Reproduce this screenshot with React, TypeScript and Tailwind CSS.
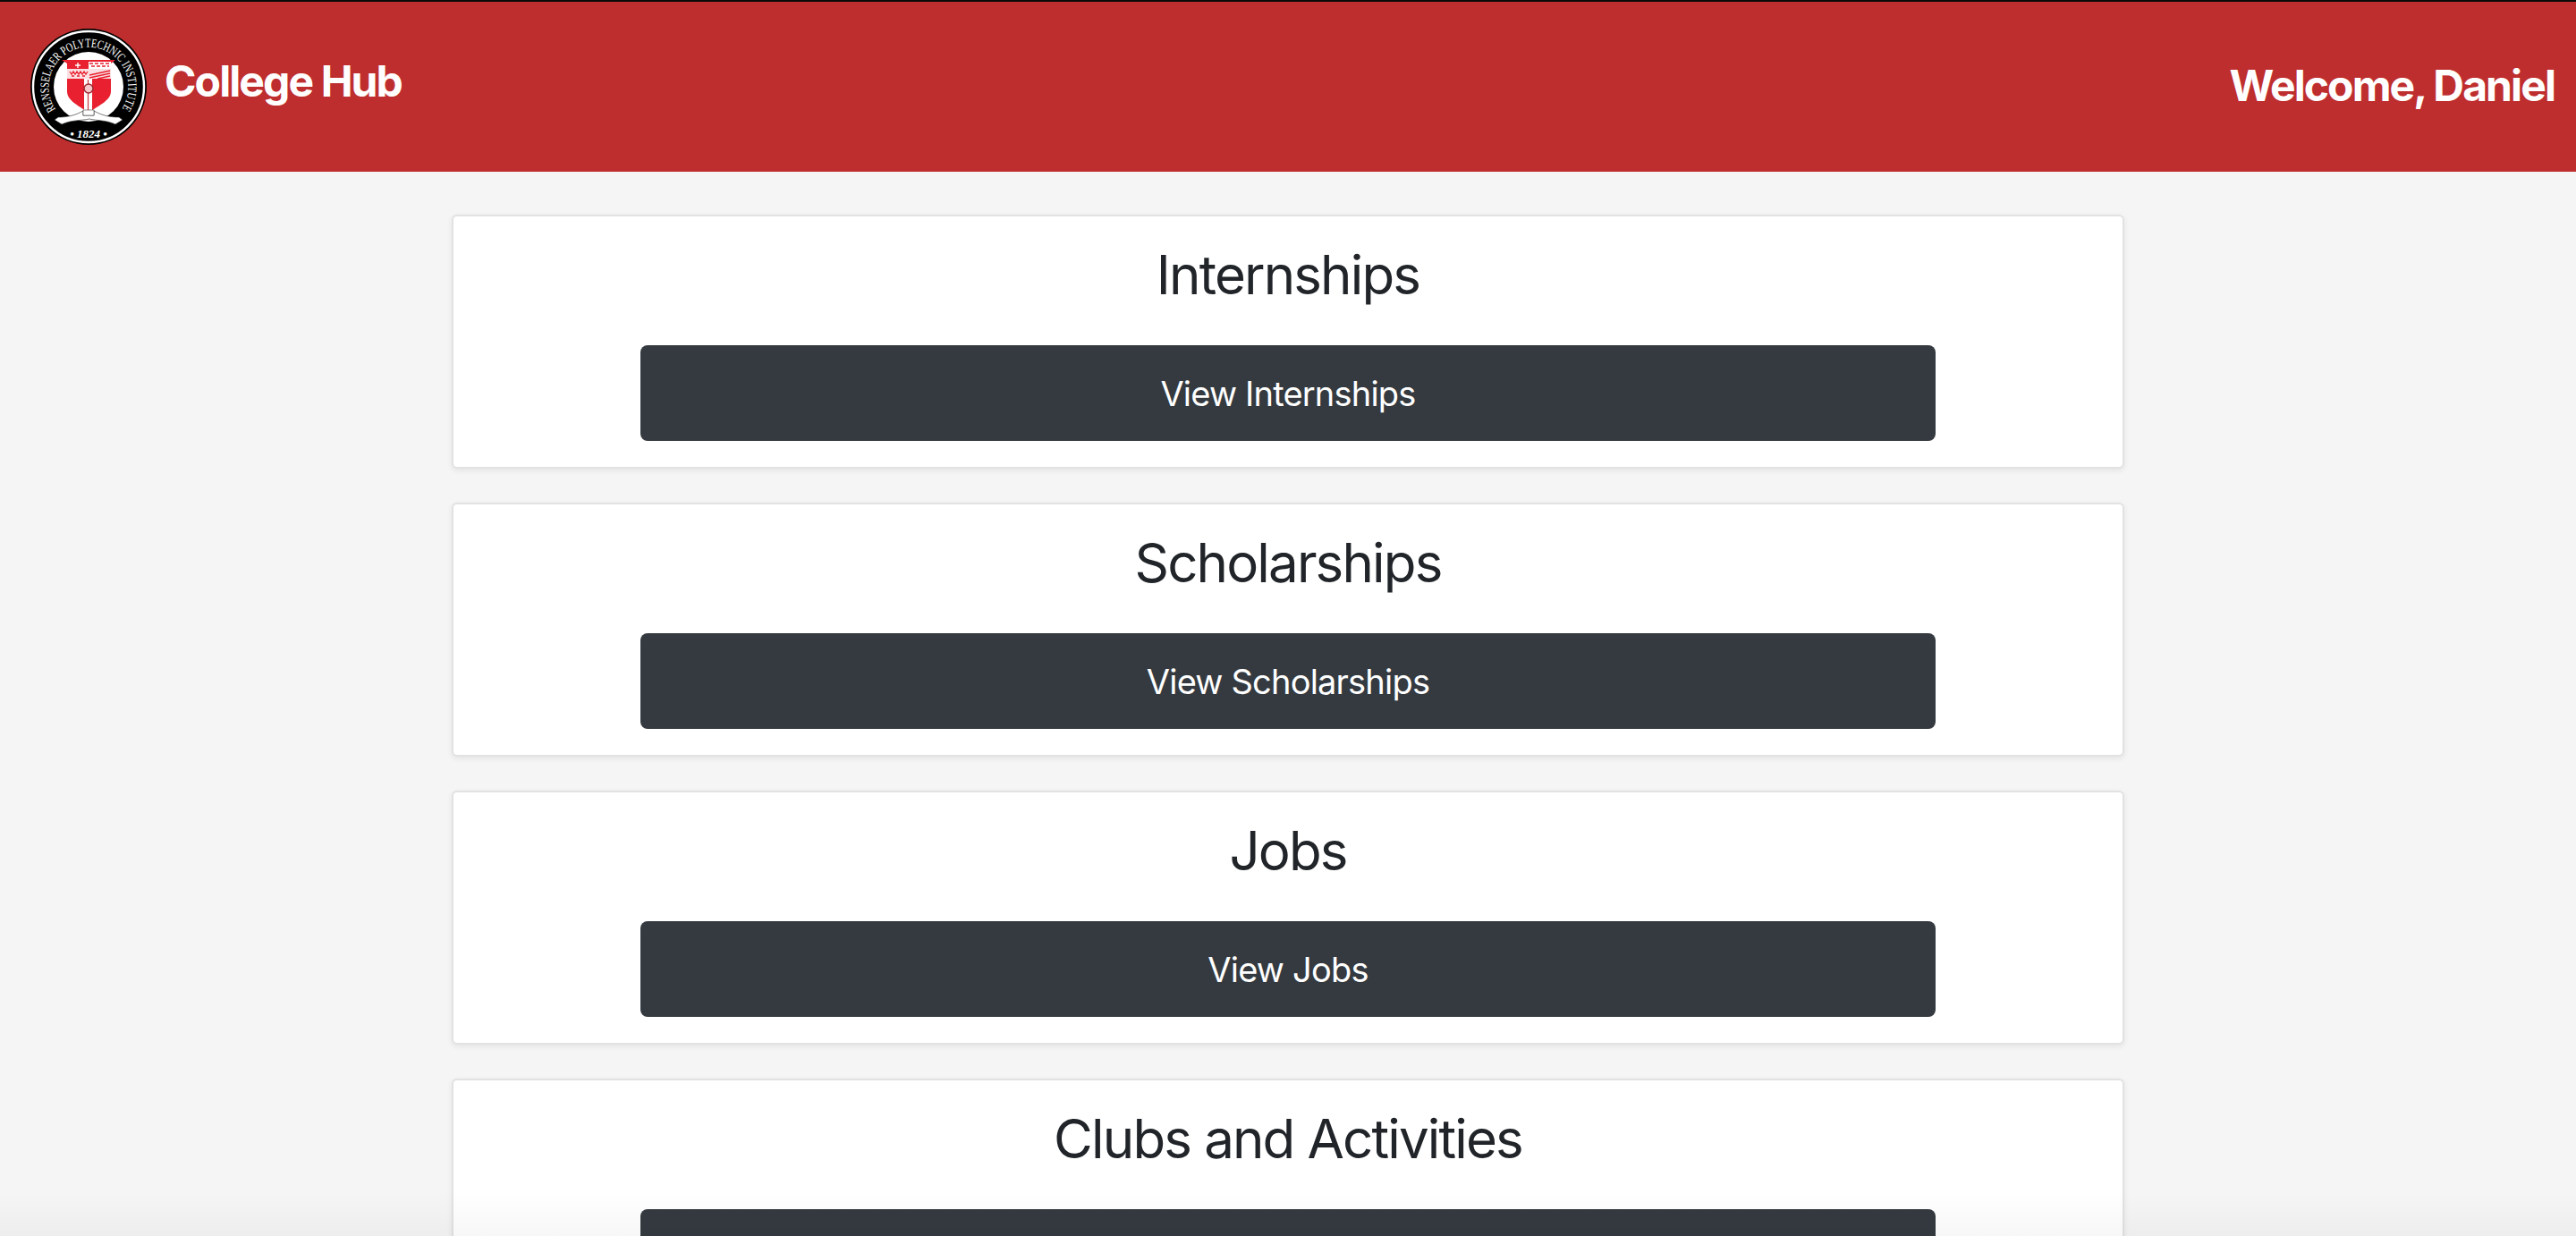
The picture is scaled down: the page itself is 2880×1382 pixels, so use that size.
const SANS = "font-['Inter','Liberation_Sans',sans-serif]";

function Seal() {
  return (
    <svg viewBox="0 0 130 130" className="w-[130px] h-[130px] shrink-0">
      <defs>
        <path id="sealRing" d="M 28.4 90.5 A 44.5 44.5 0 1 1 101.6 90.5" />
      </defs>
      <circle cx="65" cy="65" r="65" fill="#000" />
      <circle cx="65" cy="65" r="62" fill="none" stroke="#fff" strokeWidth="2.4" />
      <circle cx="65" cy="65" r="39" fill="#fff" />
      <text fill="#fff" fontFamily="Liberation Serif, serif" fontSize="14" textLength="192" lengthAdjust="spacingAndGlyphs">
        <textPath href="#sealRing" textLength="192" lengthAdjust="spacingAndGlyphs">RENSSELAER POLYTECHNIC INSTITUTE</textPath>
      </text>
      <path d="M35 35 H95 L90 39 V70 C90 80 78 85 65 94 C52 85 41 80 41 70 V39 Z" fill="#e8202f" />
      <path d="M53 38v6M50 41h6" stroke="#fff" strokeWidth="1.4" />
      <rect x="65" y="37" width="25" height="8" fill="#fff" />
      <path d="M66 39h23M68 42h20" stroke="#e8202f" strokeWidth="1.6" strokeDasharray="4 2" />
      <rect x="41" y="45" width="24" height="11" fill="#fbdfe2" />
      <path d="M44 48l2 3 2-3 2 3 2-3 2 3 2-3 2 3 2-3 2 3 2-3M46 53h3M52 53h3M58 53h3" stroke="#e8202f" strokeWidth="1.3" fill="none" />
      <rect x="65" y="45" width="25" height="11" fill="#fbdfe2" />
      <path d="M66 52l23-5M66 55l23-5M75 56l14-3" stroke="#e8202f" strokeWidth="1.3" />
      <path d="M60 56h9v36l-4.500 2-4.500-2z" fill="#fff" />
      <path d="M64.500 57v35" stroke="#c93a43" strokeWidth="1.2" />
      <circle cx="65" cy="67" r="5" fill="#f7c8cc" stroke="#9c2b33" strokeWidth="1.600" />
      <path d="M27 102 L31 99 C42 99 50 97 59 92 L59 97 H71 V92 C80 97 88 99 99 99 L103 102 L95 107 C84 102 74 103 66 101 C56 103 46 102 35 107 Z" fill="#fff" stroke="#222" strokeWidth="0.6" />
      <rect x="59" y="91" width="12" height="6" fill="#fff" stroke="#222" strokeWidth="0.5" />
      <text x="65" y="122" textAnchor="middle" fill="#fff" fontFamily="Liberation Serif, serif" fontStyle="italic" fontWeight="700" fontSize="13">
        • 1824 •
      </text>
    </svg>
  );
}

function Card({ title, action }: { title: string; action?: string }) {
  return (
    <section className="bg-white border-2 border-[#e2e2e2] rounded-[6px] shadow-[0_2px_6px_rgba(0,0,0,0.08)] h-[284px] px-[209px] pt-[31px] shrink-0">
      <h3 className="text-[60px] leading-[68px] text-[#212529] text-center tracking-[-1.85px] font-normal">{title}</h3>
      <button className="mt-[45px] w-full h-[107px] bg-[#343a40] rounded-[8px] text-white text-[38px] tracking-[-0.8px] leading-none">
        {action}
      </button>
    </section>
  );
}

export default function App() {
  const cards: { title: string; action?: string }[] = [
    { title: "Internships", action: "View Internships" },
    { title: "Scholarships", action: "View Scholarships" },
    { title: "Jobs", action: "View Jobs" },
    { title: "Clubs and Activities" },
  ];
  return (
    <div className={`${SANS} h-[1382px] overflow-hidden bg-[#f5f5f5] relative`}>
      <header className="h-[192px] border-t-2 border-[#0a0a0a] bg-[#bf2e2e] flex justify-between pl-[34px] pr-[24px]">
        <div className="flex items-start pt-[30px]">
          <Seal />
          <span className="ml-[20px] mt-[31px] text-[48px] leading-[56px] font-bold text-white tracking-[-1.9px]">College Hub</span>
        </div>
        <div className="pt-[66px] text-[48px] leading-[56px] font-bold text-white tracking-[-1.9px]">Welcome, Daniel</div>
      </header>
      <main className="w-[1870px] mx-auto pt-[48px] flex flex-col gap-[38px]">
        {cards.map((c) => (
          <Card key={c.title} title={c.title} action={c.action} />
        ))}
      </main>
      <div className="absolute inset-x-0 bottom-0 h-[50px] bg-gradient-to-b from-transparent to-[rgba(0,0,0,0.03)] pointer-events-none" />
    </div>
  );
}
